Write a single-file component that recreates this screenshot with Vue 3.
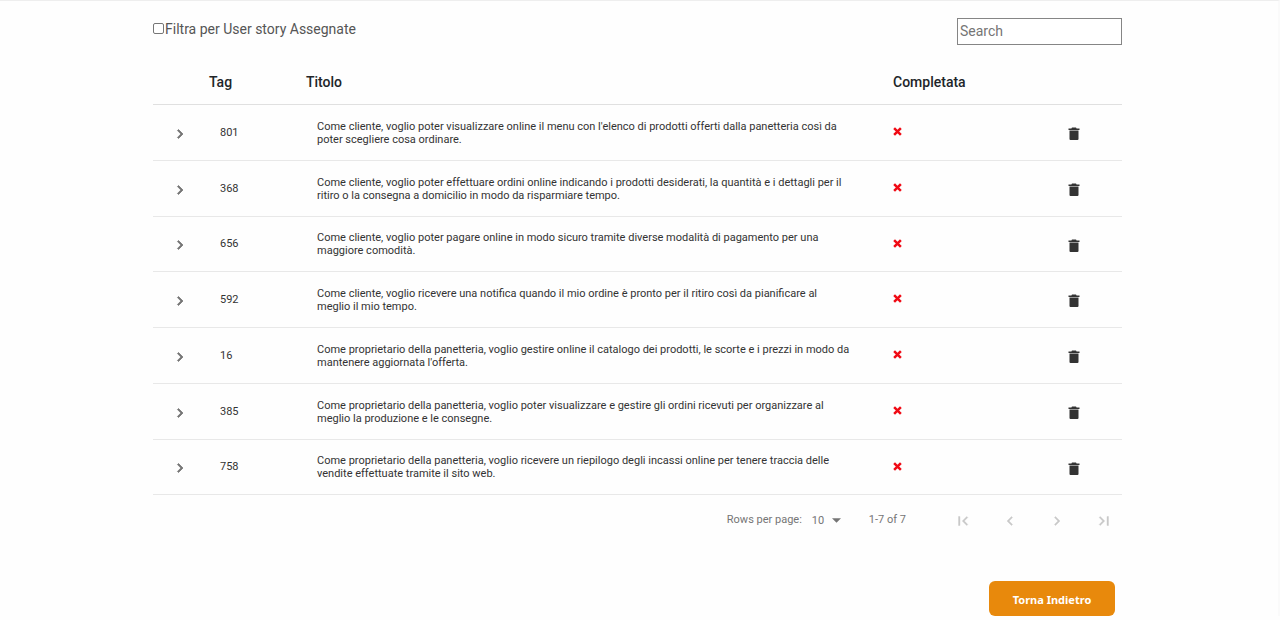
<script setup>
import { ref } from 'vue'

const onlyAssigned = ref(false)
const search = ref('')
const perPage = ref(10)

const stories = [
  { tag: 801, title: "Come cliente, voglio poter visualizzare online il menu con l'elenco di prodotti offerti dalla panetteria così da poter scegliere cosa ordinare." },
  { tag: 368, title: 'Come cliente, voglio poter effettuare ordini online indicando i prodotti desiderati, la quantità e i dettagli per il ritiro o la consegna a domicilio in modo da risparmiare tempo.' },
  { tag: 656, title: 'Come cliente, voglio poter pagare online in modo sicuro tramite diverse modalità di pagamento per una maggiore comodità.' },
  { tag: 592, title: 'Come cliente, voglio ricevere una notifica quando il mio ordine è pronto per il ritiro così da pianificare al meglio il mio tempo.' },
  { tag: 16, title: "Come proprietario della panetteria, voglio gestire online il catalogo dei prodotti, le scorte e i prezzi in modo da mantenere aggiornata l'offerta." },
  { tag: 385, title: 'Come proprietario della panetteria, voglio poter visualizzare e gestire gli ordini ricevuti per organizzare al meglio la produzione e le consegne.' },
  { tag: 758, title: 'Come proprietario della panetteria, voglio ricevere un riepilogo degli incassi online per tenere traccia delle vendite effettuate tramite il sito web.' }
]

const pagerButtons = [
  { label: 'Prima pagina', path: 'M18.41 16.59L13.82 12l4.59-4.59L17 6l-6 6 6 6zM6 6h2v12H6z' },
  { label: 'Pagina precedente', path: 'M15.41 7.41L14 6l-6 6 6 6 1.41-1.41L10.83 12z' },
  { label: 'Pagina successiva', path: 'M10 6L8.59 7.41 13.17 12l-4.58 4.59L10 18l6-6z' },
  { label: 'Ultima pagina', path: 'M5.59 7.41L10.18 12l-4.59 4.59L7 18l6-6-6-6zM16 6h2v12h-2z' }
]
</script>

<template>
  <main class="page">
    <div class="content">
      <div class="toolbar">
        <label class="filter">
          <input v-model="onlyAssigned" type="checkbox" />
          <span>Filtra per User story Assegnate</span>
        </label>
        <input v-model="search" class="search" type="text" placeholder="Search" aria-label="Search" />
      </div>

      <table class="stories">
        <colgroup>
          <col class="col-expand" />
          <col class="col-tag" />
          <col />
          <col class="col-done" />
          <col class="col-delete" />
        </colgroup>
        <thead>
          <tr>
            <th></th>
            <th scope="col">Tag</th>
            <th scope="col">Titolo</th>
            <th scope="col">Completata</th>
            <th></th>
          </tr>
        </thead>
        <tbody>
          <tr v-for="story in stories" :key="story.tag">
            <td class="expand">
              <button type="button" aria-label="Espandi">
                <svg viewBox="0 0 24 24"><path d="M10 6L8.59 7.41 13.17 12l-4.58 4.59L10 18l6-6z" /></svg>
              </button>
            </td>
            <td class="tag">{{ story.tag }}</td>
            <td class="title">{{ story.title }}</td>
            <td class="done">
              <svg viewBox="0 0 8 8" role="img" aria-label="No"><path d="M1 1L7 7M7 1L1 7" /></svg>
            </td>
            <td class="delete">
              <button type="button" aria-label="Elimina">
                <svg viewBox="0 0 12 14"><path d="M4 .5h4l.6 1h2.9v1.4H.5V1.500h2.900zM1.500 3.500h9v8.500a1 1 0 0 1-1 1h-7a1 1 0 0 1-1-1z" /></svg>
              </button>
            </td>
          </tr>
        </tbody>
      </table>

      <div class="pagination">
        <label for="per-page">Rows per page:</label>
        <div class="select">
          <select id="per-page" v-model="perPage">
            <option :value="10">10</option>
            <option :value="15">15</option>
            <option :value="20">20</option>
          </select>
          <svg viewBox="0 0 10 5"><path d="M0 0h10L5 5z" /></svg>
        </div>
        <span class="range">1-7 of 7</span>
        <div class="pager">
          <button v-for="b in pagerButtons" :key="b.label" type="button" disabled :aria-label="b.label">
            <svg viewBox="0 0 24 24"><path :d="b.path" /></svg>
          </button>
        </div>
      </div>

      <div class="actions">
        <button class="back" type="button">Torna Indietro</button>
      </div>
    </div>
  </main>
</template>

<style>
body {
  background: #fefefe;
}
</style>

<style scoped>
.page {
  box-sizing: border-box;
  padding: 17px 3px 0 0;
  border-top: 1px solid #eeeeee;
  border-right: 2px solid #fafafa;
  font-family: Roboto, "Liberation Sans", sans-serif;
  color: #333;
}
.content {
  width: 76%;
  margin: 0 auto;
}
button {
  padding: 0;
  border: 0;
  background: none;
  font: inherit;
  color: inherit;
  cursor: pointer;
}
svg {
  display: block;
  fill: currentColor;
}
.toolbar {
  display: flex;
  justify-content: space-between;
  align-items: flex-start;
}
.filter {
  display: flex;
  align-items: center;
  font-size: 14px;
  line-height: 22px;
  color: #555;
}
.filter input {
  appearance: none;
  box-sizing: border-box;
  width: 11px;
  height: 11px;
  margin: 0 1px 2px 0;
  border: 1px solid #767676;
  border-radius: 2px;
  background: #fff;
}
.filter input:checked {
  background: #767676;
}
.search {
  box-sizing: border-box;
  width: 165px;
  height: 27px;
  padding: 0 2px 2px;
  border: 1px solid #858585;
  border-radius: 0;
  background: #fff;
  font: 14px Roboto, "Liberation Sans", sans-serif;
}
.search::placeholder {
  color: #757575;
}
.stories {
  width: 100%;
  margin-top: 15px;
  table-layout: fixed;
  border-collapse: separate;
  border-spacing: 0;
}
.col-expand { width: 56px; }
.col-tag { width: 97px; }
.col-done { width: 134px; }
.col-delete { width: 95px; }
th {
  box-sizing: border-box;
  height: 45px;
  padding: 0;
  border-bottom: 1px solid #e0e0e0;
  text-align: left;
  font-size: 14px;
  font-weight: 500;
  color: #212529;
}
td {
  box-sizing: border-box;
  height: 56px;
  padding: 0;
  border-bottom: 1px solid #e8e8e8;
  vertical-align: middle;
}
tr:nth-child(4n + 3) td {
  height: 55px;
}
.expand button {
  display: block;
  margin: 2px 0 0 18px;
  color: #757575;
}
.expand svg {
  width: 18px;
  height: 18px;
}
.expand path {
  stroke: currentColor;
  stroke-width: 1;
}
.tag {
  padding: 0 0 1px 11px;
  font-size: 11px;
}
.title {
  padding: 0 42px 0 11px;
  font-size: 11px;
  line-height: 13px;
}
.done {
  padding-bottom: 2px;
}
.done svg {
  width: 9px;
  height: 9px;
}
.done path {
  stroke: #f00a14;
  stroke-width: 2.2;
}
.delete button {
  display: block;
  margin: 3px auto 0 41px;
}
.delete svg {
  width: 12px;
  height: 14px;
}
.pagination {
  display: flex;
  justify-content: flex-end;
  align-items: center;
  height: 48px;
  font-size: 11px;
  color: #757575;
}
.select {
  display: flex;
  align-items: center;
  margin: 2px 28px 0 10px;
}
.select select {
  appearance: none;
  width: 20px;
  padding: 0;
  border: 0;
  background: transparent;
  font: inherit;
  color: inherit;
}
.select svg {
  width: 9px;
  height: 5px;
}
.pager {
  display: flex;
  gap: 29px;
  margin: 4px 9px 0 48px;
  color: #c8c8c8;
}
.pager svg {
  width: 18px;
  height: 18px;
}
.pager path {
  stroke: currentColor;
  stroke-width: 0.5;
}
.actions {
  display: flex;
  justify-content: flex-end;
  margin-top: 38px;
  padding-right: 7px;
}
.back {
  width: 126px;
  height: 35px;
  padding-top: 2px;
  border-radius: 6px;
  background: #e8890c;
  color: #fff;
  font: 700 11px "Noto Sans", "Open Sans", sans-serif;
}
</style>
